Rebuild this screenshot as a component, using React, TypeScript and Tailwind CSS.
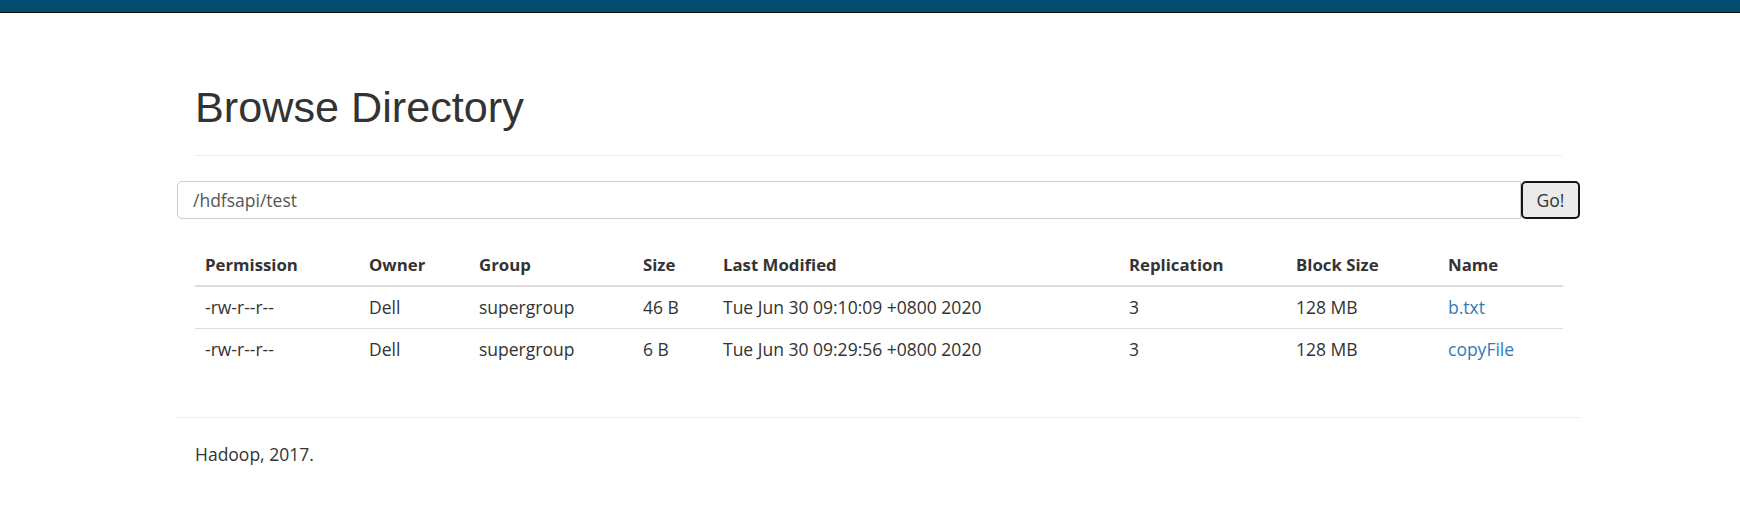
import React from "react";

const rows = [
  { perm: "-rw-r--r--", owner: "Dell", group: "supergroup", size: "46 B", mod: "Tue Jun 30 09:10:09 +0800 2020", rep: "3", block: "128 MB", name: "b.txt" },
  { perm: "-rw-r--r--", owner: "Dell", group: "supergroup", size: "6 B", mod: "Tue Jun 30 09:29:56 +0800 2020", rep: "3", block: "128 MB", name: "copyFile" },
];

const cols = ["Permission", "Owner", "Group", "Size", "Last Modified", "Replication", "Block Size", "Name"];
const widths = ["w-[164px]", "w-[110px]", "w-[164px]", "w-[80px]", "w-[406px]", "w-[167px]", "w-[152px]", "w-[125px]"];

export default function App() {
  return (
    <div className="min-h-[527px] bg-white text-[#333] font-['Open_Sans',sans-serif] text-[17.5px]">
      <div className="h-[13px] bg-[#034b6f] border-b border-[#0a0a0a]" />
      <div className="ml-[177px] w-[1403px]">
        <div className="mx-[18px] mt-[70px] pb-[24px] border-b border-[#eeeeee]">
          <h1 className="h-[48px] leading-[48px] text-[43.2px] font-['Liberation_Sans',Arial,sans-serif] font-normal text-[#333]">
            Browse Directory
          </h1>
        </div>
        <div className="mt-[25px] flex h-[38px]">
          <div className="flex-1 h-[38px] border border-[#cccccc] rounded-l-[5px] flex items-center pl-[15px] pt-[1px] text-[#555]">
            /hdfsapi/test
          </div>
          <button className="w-[59px] h-[38px] border-2 border-[#151515] rounded-[5px] bg-[#ebebeb] text-[#333] flex items-center justify-center">
            Go!
          </button>
        </div>
        <div className="mx-[18px] mt-[24px]">
          <table className="w-[1368px] table-fixed border-collapse">
            <thead>
              <tr className="border-b-2 border-[#dddddd]">
                {cols.map((c, i) => (
                  <th key={c} className={`${widths[i]} h-[43px] px-[10px] pt-[1px] text-left text-[16.8px] font-bold align-middle`}>
                    {c}
                  </th>
                ))}
              </tr>
            </thead>
            <tbody>
              {rows.map((r, idx) => (
                <tr key={r.name} className={idx === 0 ? "border-b border-[#dddddd]" : ""}>
                  <td className="h-[42px] px-[10px] align-middle">{r.perm}</td>
                  <td className="px-[10px] align-middle">{r.owner}</td>
                  <td className="px-[10px] align-middle">{r.group}</td>
                  <td className="px-[10px] align-middle">{r.size}</td>
                  <td className="px-[10px] align-middle">{r.mod}</td>
                  <td className="px-[10px] align-middle">{r.rep}</td>
                  <td className="px-[10px] align-middle">{r.block}</td>
                  <td className="px-[10px] align-middle">
                    <a className="text-[#337ab7]" href="#">{r.name}</a>
                  </td>
                </tr>
              ))}
            </tbody>
          </table>
        </div>
        <div className="mt-[47px] border-t border-[#eeeeee]" />
        <p className="mt-[24px] ml-[18px] leading-[24px]">Hadoop, 2017.</p>
      </div>
    </div>
  );
}
